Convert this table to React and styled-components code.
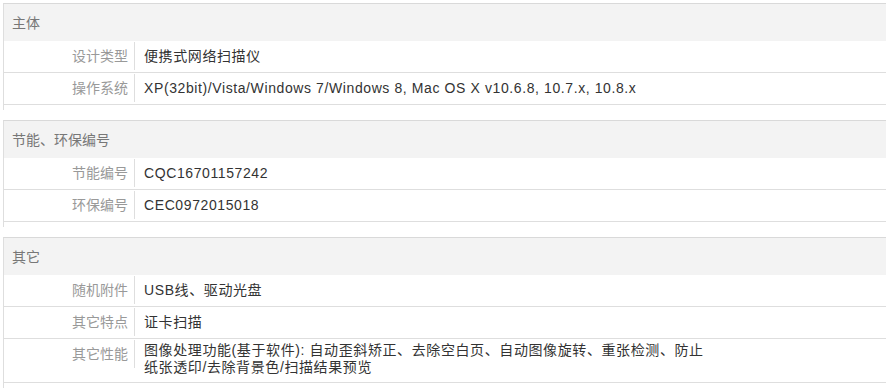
import React from "react";
import styled, { createGlobalStyle } from "styled-components";

const GlobalStyle = createGlobalStyle`
  html, body {
    margin: 0;
    padding: 0;
    background: #fff;
  }
  body {
    font-family: "Liberation Sans", Arial, "Noto Sans CJK SC", sans-serif;
    font-size: 14px;
  }
`;

const Page = styled.div`
  padding: 3px 5px 0 3px;
`;

const Section = styled.div`
  border-top: 1px solid #d9d9d9;
  border-left: 1px solid #dedede;
  padding-bottom: 5px;
  margin-bottom: 10px;
`;

const Header = styled.div`
  height: 37px;
  line-height: 38px;
  padding-left: 8px;
  background: #f3f3f3;
  color: #777;
  font-size: 14px;
`;

const Row = styled.div`
  display: flex;
  align-items: flex-start;
  border-bottom: 1px solid #dedede;
`;

const Label = styled.div`
  box-sizing: border-box;
  flex: 0 0 131px;
  height: 28px;
  margin-top: 1px;
  line-height: 28px;
  padding-right: 6px;
  text-align: right;
  border-right: 1px solid #dedede;
  color: #999;
`;

const Value = styled.div`
  margin-left: 9px;
  color: #333;
  letter-spacing: 0.6px;
  padding-top: ${(p) => (p.$multi ? 3 : 1)}px;
  padding-bottom: ${(p) => (p.$multi ? 6 : 2)}px;
  line-height: ${(p) => (p.$multi ? 17 : 28)}px;
`;

const Line = styled.div`
  white-space: nowrap;
`;

const sections = [
  {
    title: "主体",
    rows: [
      ["设计类型", ["便携式网络扫描仪"]],
      ["操作系统", ["XP(32bit)/Vista/Windows 7/Windows 8, Mac OS X v10.6.8, 10.7.x, 10.8.x"]],
    ],
  },
  {
    title: "节能、环保编号",
    rows: [
      ["节能编号", ["CQC16701157242"]],
      ["环保编号", ["CEC0972015018"]],
    ],
  },
  {
    title: "其它",
    rows: [
      ["随机附件", ["USB线、驱动光盘"]],
      ["其它特点", ["证卡扫描"]],
      [
        "其它性能",
        [
          "图像处理功能(基于软件): 自动歪斜矫正、去除空白页、自动图像旋转、重张检测、防止",
          "纸张透印/去除背景色/扫描结果预览",
        ],
      ],
    ],
  },
];

const App = () => {
  return (
    <Page>
      <GlobalStyle />
      {sections.map((s) => (
        <Section key={s.title}>
          <Header>{s.title}</Header>
          {s.rows.map(([label, lines]) => (
            <Row key={label}>
              <Label>{label}</Label>
              <Value $multi={lines.length > 1}>
                {lines.map((l) => (
                  <Line key={l}>{l}</Line>
                ))}
              </Value>
            </Row>
          ))}
        </Section>
      ))}
    </Page>
  );
};

export default App;
